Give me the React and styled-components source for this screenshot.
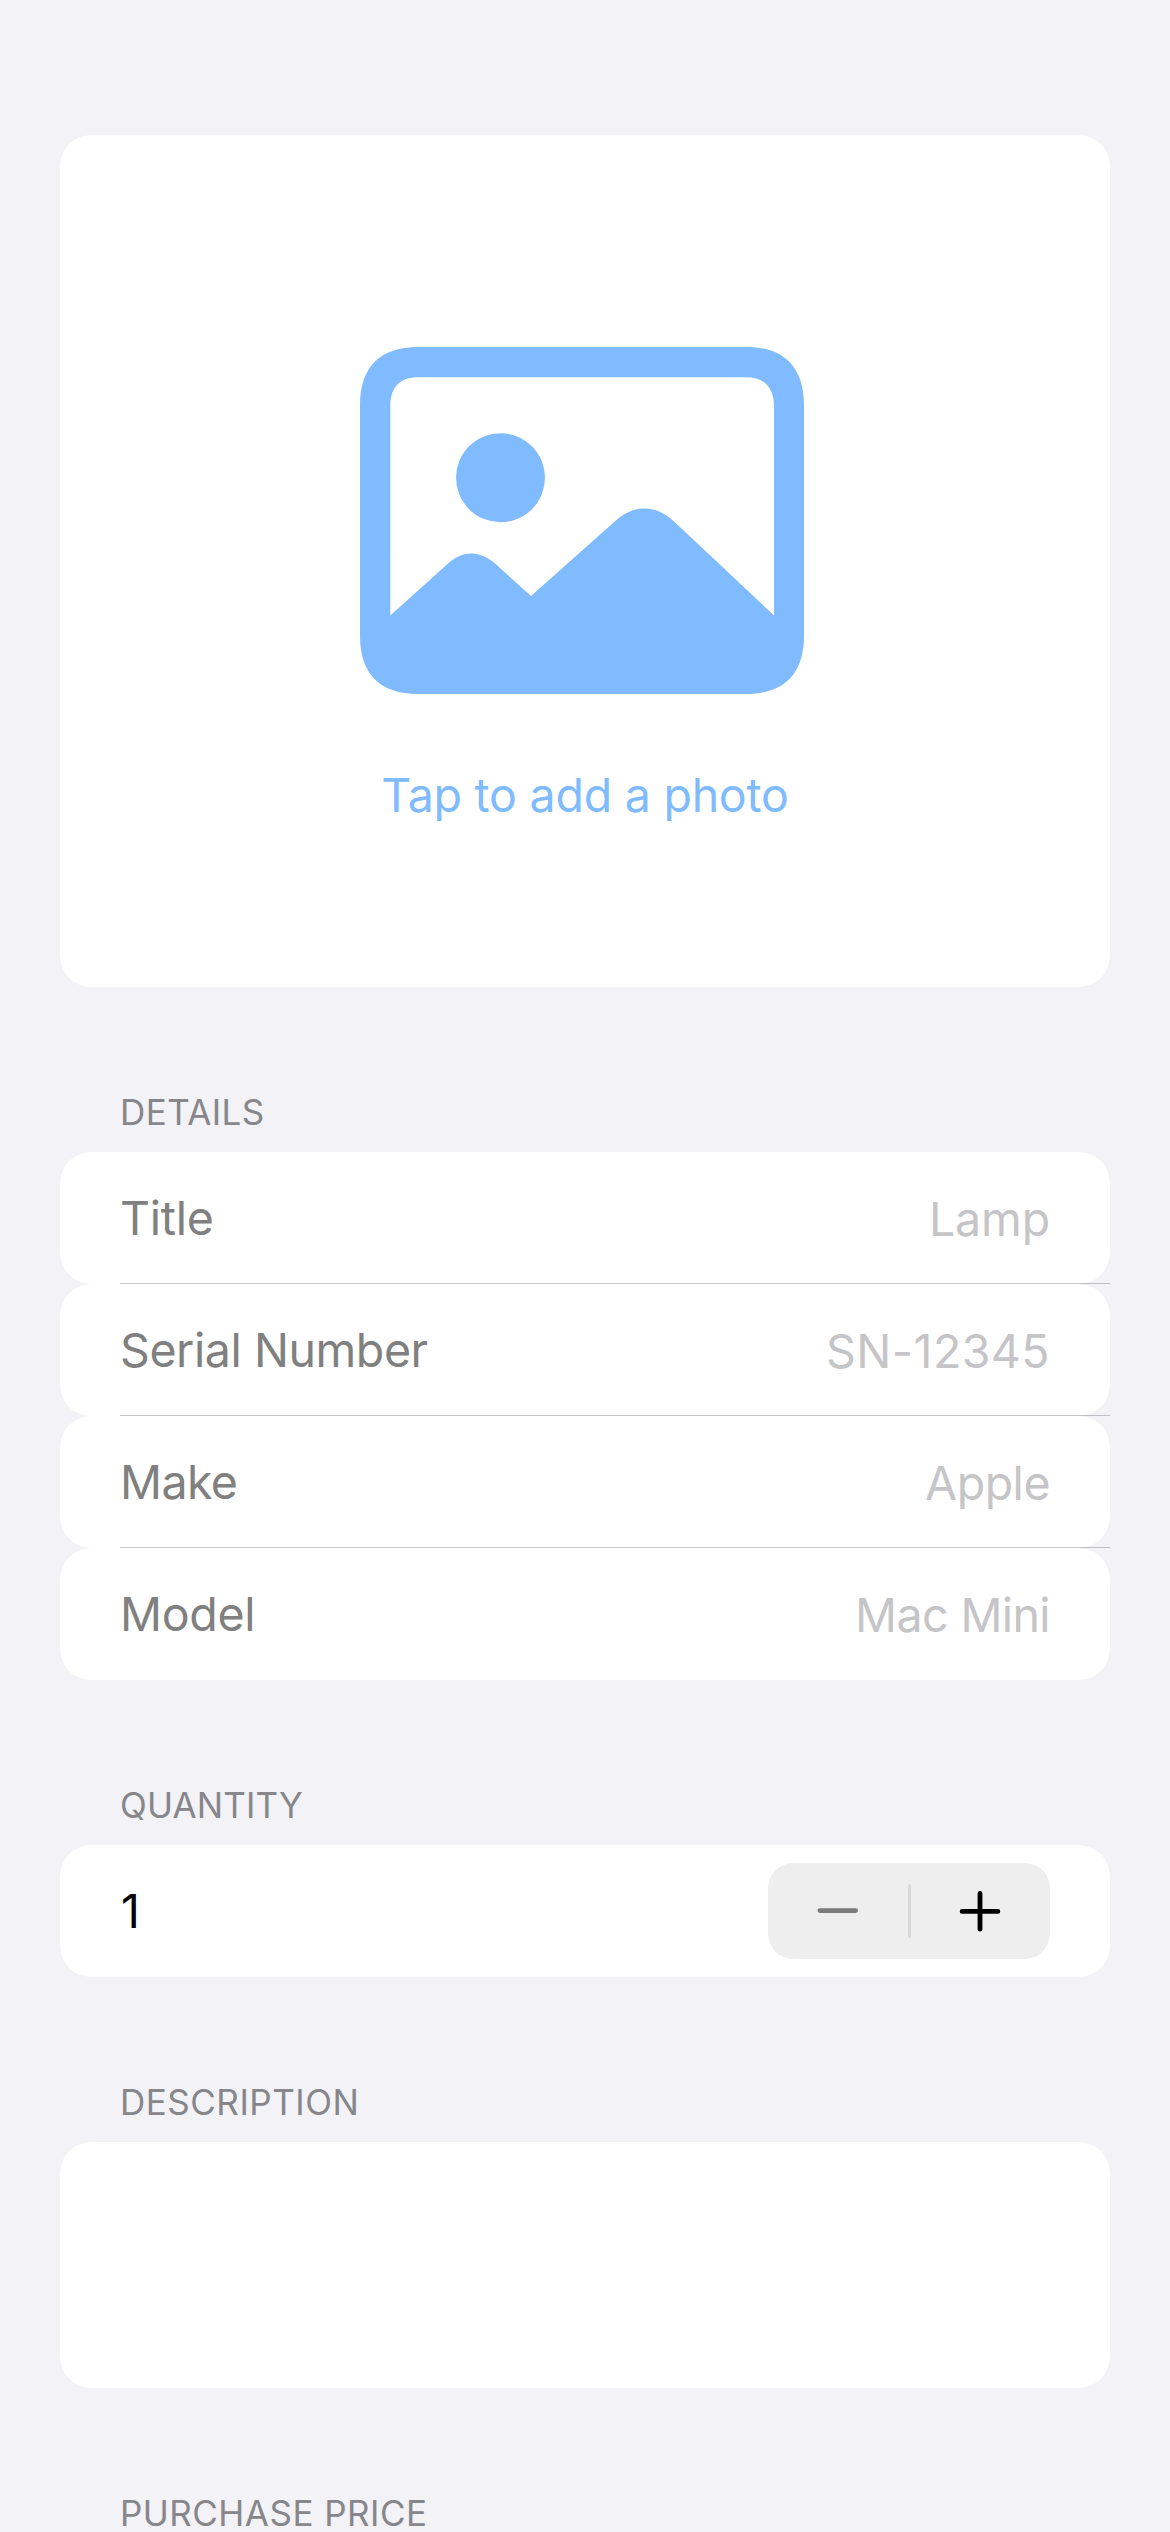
import React, { Fragment } from "react";
import styled, { createGlobalStyle, css } from "styled-components";

const GlobalStyle = createGlobalStyle`
  *, *::before, *::after { box-sizing: border-box; }
  body {
    margin: 0;
    background: #f2f2f7;
    font-family: Inter, "Liberation Sans", sans-serif;
    font-size: 46.5px;
    -webkit-font-smoothing: antialiased;
  }
`;

const continuousCorner = css`
  border-radius: 30px;
  @supports (corner-shape: superellipse(1.2)) {
    border-radius: 35px;
    corner-shape: superellipse(1.2);
  }
`;

const Screen = styled.main`
  display: flex;
  flex-direction: column;
  width: 1170px;
  height: 2532px;
  padding: 135px 60px 0;
  overflow: hidden;
  background: #f2f2f7;
`;

const Card = styled.div`
  flex: none;
  background: #fff;
  ${continuousCorner}
`;

const PhotoCard = styled(Card).attrs({ as: "button", type: "button" })`
  display: flex;
  flex-direction: column;
  align-items: center;
  gap: 72px;
  height: 852px;
  padding: 212px 0 0;
  border: 0;
  color: #80bbff;
  font: inherit;
`;

const PhotoIcon = styled.svg`
  display: block;
  flex: none;
  width: 444px;
  height: 347px;
  margin-right: 6px;
`;

const PhotoCaption = styled.span`
  line-height: 58px;
  letter-spacing: -0.25px;
`;

const Section = styled.section`
  flex: none;
  display: flex;
  flex-direction: column;
`;

const SectionHeader = styled.h2`
  display: flex;
  align-items: flex-end;
  height: 165px;
  margin: 0;
  padding: 0 60px 21px;
  color: #86868b;
  font-size: 35px;
  font-weight: 400;
  line-height: 38px;
  letter-spacing: ${({ $tracking }) => $tracking}px;
`;

const Row = styled(Card)`
  display: flex;
  align-items: center;
  justify-content: space-between;
  height: 132px;
  padding: 0 60px;
`;

const Separator = styled.div`
  height: 1px;
  margin: -1px 0 0 60px;
  background: rgba(60, 60, 67, 0.29);
  z-index: 1;
`;

const Label = styled.span`
  color: #808080;
  line-height: 58px;
  letter-spacing: ${({ $tracking }) => $tracking}px;
`;

const Placeholder = styled.span`
  padding-top: 2px;
  color: #c5c5c7;
  line-height: 58px;
  letter-spacing: ${({ $tracking }) => $tracking}px;
`;

const Quantity = styled.span`
  padding-left: 1px;
  color: #000;
  line-height: 58px;
`;

const Stepper = styled.div`
  display: flex;
  align-items: center;
  width: 282px;
  height: 96px;
  border-radius: 24px;
  background: #eee;
  @supports (corner-shape: superellipse(1.2)) {
    border-radius: 28px;
    corner-shape: superellipse(1.2);
  }
`;

const StepButton = styled.button`
  flex: 1;
  display: flex;
  align-items: center;
  justify-content: center;
  height: 96px;
  padding: 0;
  border: 0;
  background: none;
  color: ${({ $muted }) => ($muted ? "#7a7a7a" : "#000")};
`;

const StepDivider = styled.div`
  width: 3px;
  height: 54px;
  border-radius: 1.5px;
  background: #d8d8d9;
`;

const Glyph = styled.svg`
  display: block;
  width: 42px;
  height: 42px;
`;

const DescriptionBox = styled(Card)`
  height: 246px;
`;

const details = [
  { label: "Title", tracking: -0.26, hint: "Lamp", hintTracking: -0.14 },
  { label: "Serial Number", tracking: -0.43, hint: "SN-12345", hintTracking: 0.42 },
  { label: "Make", tracking: -0.6, hint: "Apple", hintTracking: -0.5 },
  { label: "Model", tracking: -0.32, hint: "Mac Mini", hintTracking: -0.6 },
];

export default function App() {
  return (
    <>
      <GlobalStyle />
      <Screen>
        <PhotoCard>
          <PhotoIcon viewBox="60 50 1332 1042" preserveAspectRatio="none" fill="currentColor" aria-hidden="true">
            <path
              fillRule="evenodd"
              d="M235 50H1218C1332 50 1392 110 1392 225V917C1392 1032 1332 1092 1218 1092H235C120 1092 60 1032 60 917V225C60 110 120 50 235 50Z
                 M235 141C180 141 151 170 151 228V856L325 699C370 660 420 660 467 702L573 798L825 573C880 522 948 522 1003 575L1302 856V228C1302 170 1272 141 1218 141Z"
            />
            <circle cx="481.5" cy="442.5" r="133.5" />
          </PhotoIcon>
          <PhotoCaption>Tap to add a photo</PhotoCaption>
        </PhotoCard>

        <Section>
          <SectionHeader $tracking={0.42}>DETAILS</SectionHeader>
          {details.map((field, index) => (
            <Fragment key={field.label}>
              <Row>
                <Label $tracking={field.tracking}>{field.label}</Label>
                <Placeholder $tracking={field.hintTracking}>{field.hint}</Placeholder>
              </Row>
              {index < details.length - 1 && <Separator />}
            </Fragment>
          ))}
        </Section>

        <Section>
          <SectionHeader $tracking={0.16}>QUANTITY</SectionHeader>
          <Row>
            <Quantity>1</Quantity>
            <Stepper>
              <StepButton $muted aria-label="Decrease">
                <Glyph viewBox="0 0 42 42" stroke="currentColor" strokeWidth="4.8" strokeLinecap="round">
                  <path d="M2.9 20.6H38.6" />
                </Glyph>
              </StepButton>
              <StepDivider />
              <StepButton aria-label="Increase">
                <Glyph viewBox="0 0 42 42" stroke="currentColor" strokeWidth="4.8" strokeLinecap="round">
                  <path d="M3.1 21.4H38.9M21 3.4V39.2" />
                </Glyph>
              </StepButton>
            </Stepper>
          </Row>
        </Section>

        <Section>
          <SectionHeader $tracking={0.51}>DESCRIPTION</SectionHeader>
          <DescriptionBox />
        </Section>

        <Section>
          <SectionHeader $tracking={0.47}>PURCHASE PRICE</SectionHeader>
        </Section>
      </Screen>
    </>
  );
}
